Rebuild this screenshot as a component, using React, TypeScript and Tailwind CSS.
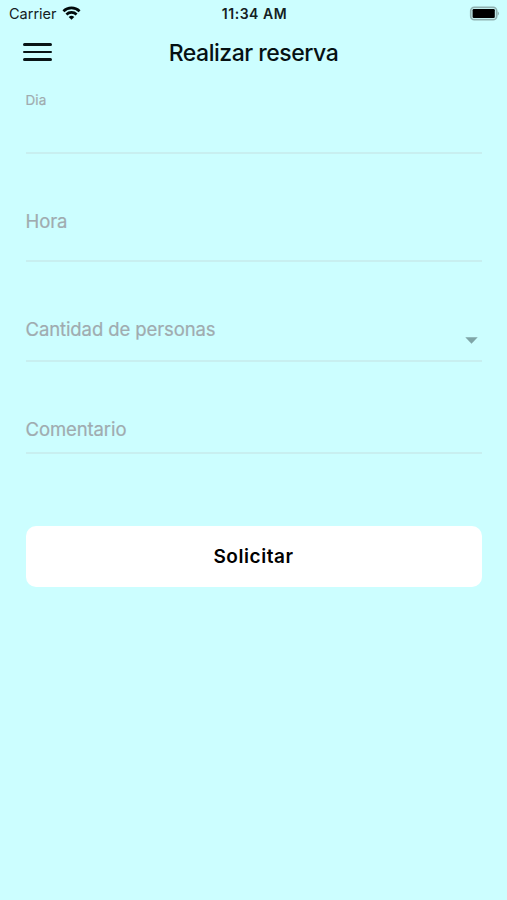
import React from "react";

type FieldProps = {
  label: string;
  className: string;
  labelClassName?: string;
  select?: boolean;
};

function Field({
  label,
  className,
  labelClassName = "text-[18.5px] leading-6 tracking-[-0.1px]",
  select,
}: FieldProps) {
  return (
    <div className={`flex justify-between border-b-2 border-[#c8eff0] ${className}`}>
      <span className={`text-[#a0abaf] [-webkit-text-stroke:0.2px_#a0abaf] ${labelClassName}`}>{label}</span>
      {select && (
        <svg className="mt-[20px] mr-[4px] h-[7px] w-[13px]" viewBox="0 0 13 7" fill="#7fa5a7">
          <path d="M0.3 0.3h12.4L6.5 6.8z" />
        </svg>
      )}
    </div>
  );
}

function StatusBar() {
  return (
    <div className="grid h-[27px] grid-cols-3 items-center pr-[7px] pl-[9px] text-[14.5px] text-[#142022]">
      <div className="flex items-center gap-[5px]">
        <span>Carrier</span>
        <svg className="-mt-[2px] h-[14px] w-[19px]" viewBox="0 0 18 14" fill="none" stroke="#000a0b" strokeWidth="2.6">
          <path d="M0.9 5.2a11.6 11.6 0 0 1 16.2 0" />
          <path d="M3.9 8.5a7.3 7.3 0 0 1 10.2 0" />
          <path d="M9 13.8L6.2 11a4 4 0 0 1 5.6 0z" fill="#000a0b" stroke="none" />
        </svg>
      </div>
      <span className="text-center text-[14px] font-semibold tracking-[0.55px]">11:34 AM</span>
      <svg className="-mt-px h-[15px] w-[31px] justify-self-end" viewBox="0 0 31 15">
        <rect x="1.7" y="1.2" width="26" height="12.6" rx="3.6" fill="#c4efef" stroke="#8fb1b1" strokeWidth="1.6" />
        <rect x="3.6" y="3.1" width="22.2" height="8.8" rx="1.2" fill="#000" />
        <path d="M28.6 5.2a2.6 2.6 0 0 1 0 4.6z" fill="#8fb1b1" />
      </svg>
    </div>
  );
}

export default function App() {
  return (
    <main className="flex h-[900px] w-[507px] flex-col bg-[#ccfeff] font-['Inter','Liberation_Sans',sans-serif]">
      <StatusBar />
      <header className="grid h-[50px] grid-cols-[60px_1fr_60px] items-center">
        <button aria-label="Menu" className="ml-[23px] flex w-[29px] flex-col gap-[5px]">
          <span className="h-[2.5px] w-full rounded-full bg-[#081416]" />
          <span className="h-[2.5px] w-full rounded-full bg-[#081416]" />
          <span className="h-[2.5px] w-full rounded-full bg-[#081416]" />
        </button>
        <h1 className="pt-[2px] text-center text-[23px] font-medium tracking-[-0.48px] text-[#061113]">
          Realizar reserva
        </h1>
      </header>
      <form className="flex flex-col px-[25.5px]">
        <Field label="Dia" className="h-[77px] pt-[13px]" labelClassName="text-[13.5px] leading-5 tracking-[0.1px]" />
        <Field label="Hora" className="mt-[55px] h-[53px]" />
        <Field label="Cantidad de personas" className="mt-[55px] h-[45px]" select />
        <Field label="Comentario" className="mt-[55px] h-[37px]" />
        <button
          type="button"
          className="mt-[72px] h-[61px] rounded-[10px] bg-white pt-[2px] text-[19px] font-semibold tracking-[0.55px] text-black"
        >
          Solicitar
        </button>
      </form>
    </main>
  );
}
